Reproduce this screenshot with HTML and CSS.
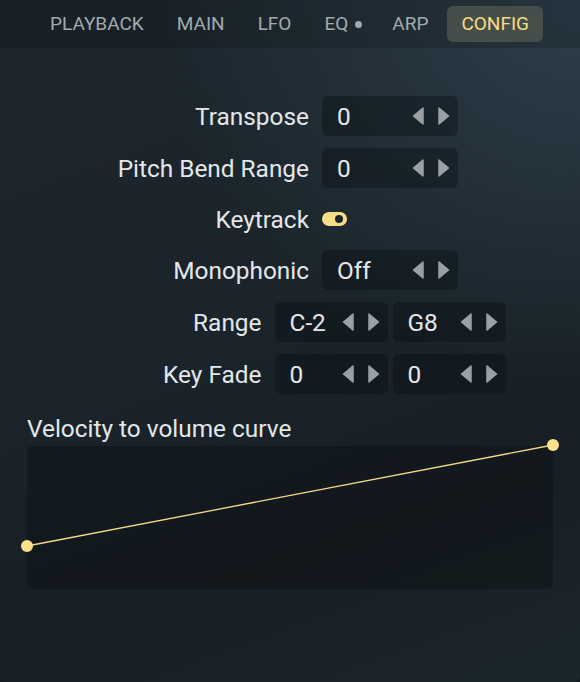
FILE: index.html
```html
<!DOCTYPE html>
<html>
<head>
<meta charset="utf-8">
<link rel="stylesheet" href="styles.css">
</head>
<body>
<div class="panel">
  <nav class="tabs">
    <span class="tab">PLAYBACK</span>
    <span class="tab">MAIN</span>
    <span class="tab">LFO</span>
    <span class="tab eq">EQ<span class="dot"></span></span>
    <span class="tab">ARP</span>
    <span class="tab active">CONFIG</span>
  </nav>
  <section class="settings">
    <div class="row">
      <div class="label">Transpose</div>
      <div class="field wide"><span class="val">0</span><span class="arrows"><svg class="arr" viewBox="0 0 12 18"><path d="M11 1 L11 17 L1.5 9 Z"/></svg><svg class="arr" viewBox="0 0 12 18"><path d="M1 1 L1 17 L10.5 9 Z"/></svg></span></div>
    </div>
    <div class="row">
      <div class="label">Pitch Bend Range</div>
      <div class="field wide"><span class="val">0</span><span class="arrows"><svg class="arr" viewBox="0 0 12 18"><path d="M11 1 L11 17 L1.5 9 Z"/></svg><svg class="arr" viewBox="0 0 12 18"><path d="M1 1 L1 17 L10.5 9 Z"/></svg></span></div>
    </div>
    <div class="row short">
      <div class="label">Keytrack</div>
      <div class="ctrl wide"><span class="toggle"><span class="knob"></span></span></div>
    </div>
    <div class="row">
      <div class="label">Monophonic</div>
      <div class="field wide"><span class="val">Off</span><span class="arrows"><svg class="arr" viewBox="0 0 12 18"><path d="M11 1 L11 17 L1.5 9 Z"/></svg><svg class="arr" viewBox="0 0 12 18"><path d="M1 1 L1 17 L10.5 9 Z"/></svg></span></div>
    </div>
    <div class="row">
      <div class="label">Range</div>
      <div class="pair">
        <div class="field half"><span class="val">C-2</span><span class="arrows"><svg class="arr" viewBox="0 0 12 18"><path d="M11 1 L11 17 L1.5 9 Z"/></svg><svg class="arr" viewBox="0 0 12 18"><path d="M1 1 L1 17 L10.5 9 Z"/></svg></span></div>
        <div class="field half"><span class="val">G8</span><span class="arrows"><svg class="arr" viewBox="0 0 12 18"><path d="M11 1 L11 17 L1.5 9 Z"/></svg><svg class="arr" viewBox="0 0 12 18"><path d="M1 1 L1 17 L10.5 9 Z"/></svg></span></div>
      </div>
    </div>
    <div class="row">
      <div class="label">Key Fade</div>
      <div class="pair">
        <div class="field half"><span class="val">0</span><span class="arrows"><svg class="arr" viewBox="0 0 12 18"><path d="M11 1 L11 17 L1.5 9 Z"/></svg><svg class="arr" viewBox="0 0 12 18"><path d="M1 1 L1 17 L10.5 9 Z"/></svg></span></div>
        <div class="field half"><span class="val">0</span><span class="arrows"><svg class="arr" viewBox="0 0 12 18"><path d="M11 1 L11 17 L1.5 9 Z"/></svg><svg class="arr" viewBox="0 0 12 18"><path d="M1 1 L1 17 L10.5 9 Z"/></svg></span></div>
      </div>
    </div>
  </section>
  <section class="curve">
    <div class="curve-title">Velocity to volume curve</div>
    <div class="graph">
      <svg class="graph-svg" viewBox="0 0 580 160" width="580" height="160">
        <line x1="27" y1="101" x2="553" y2="0" stroke="#f3d98a" stroke-width="1.3"/>
        <circle cx="27" cy="101" r="6" fill="#fde08a"/>
        <circle cx="553" cy="0" r="6" fill="#fde08a"/>
      </svg>
    </div>
  </section>
</div>
</body>
</html>
```
FILE: styles.css
```css
html, body {
  margin: 0;
  padding: 0;
  background: #141b20;
}
body {
  font-family: Roboto, "Noto Sans", sans-serif;
}
.panel {
  width: 580px;
  height: 682px;
  box-sizing: border-box;
  border-radius: 0 0 6px 6px;
  overflow: hidden;
  background:
    radial-gradient(ellipse 420px 380px at 100% 0%, rgba(48,66,80,0.85), rgba(48,66,80,0) 100%),
    linear-gradient(160deg, #1d262d 0%, #1a242a 45%, #171f24 75%, #1b262b 100%);
  display: flex;
  flex-direction: column;
}
.tabs {
  height: 48px;
  display: flex;
  align-items: center;
  padding-left: 36px;
  background: rgba(10, 16, 20, 0.22);
  box-sizing: border-box;
}
.tab {
  font-size: 19px;
  color: #a3a9ad;
  padding: 0 14px;
  height: 36px;
  line-height: 36px;
  margin-right: 5px;
  display: flex;
  align-items: center;
}
.tab.eq {
  padding-right: 11px;
}
.tab .dot {
  width: 7px;
  height: 7px;
  border-radius: 50%;
  background: #a3a9ad;
  margin-left: 7px;
}
.tab.active {
  background: #454e48;
  color: #f7dd85;
  border-radius: 6px;
}
.settings {
  padding-top: 48px;
  padding-right: 5px;
  display: flex;
  flex-direction: column;
  gap: 12px;
}
.row {
  display: flex;
  justify-content: center;
  align-items: center;
  gap: 13px;
  height: 40px;
}
.row.short {
  height: 38px;
}
.label {
  width: 192px;
  text-align: right;
  color: #e4e7e9;
  font-size: 24.4px;
}
.ctrl {
  height: 38px;
  display: flex;
  align-items: center;
}
.wide { width: 136px; }
.half { width: 113px; }
.pair {
  display: flex;
  gap: 5px;
}
.field {
  height: 40px;
  box-sizing: border-box;
  background: rgba(12, 18, 22, 0.45);
  border-radius: 6px;
  display: flex;
  align-items: center;
  justify-content: space-between;
  padding: 0 8px 0 15px;
}
.val {
  color: #e4e7e9;
  font-size: 24.4px;
}
.arrows {
  display: flex;
  gap: 14px;
  align-items: center;
}
.arr {
  width: 12px;
  height: 18px;
  fill: #9aa0a3;
  stroke: #9aa0a3;
  stroke-width: 1.5;
  stroke-linejoin: round;
}
.toggle {
  width: 25px;
  height: 14px;
  border-radius: 7px;
  background: #f7dd85;
  position: relative;
  display: block;
}
.knob {
  position: absolute;
  width: 8px;
  height: 8px;
  border-radius: 50%;
  background: #1b252b;
  right: 4px;
  top: 3px;
}
.curve {
  padding: 0 27px;
}
.curve-title {
  color: #e4e7e9;
  font-size: 24.4px;
  height: 52px;
  box-sizing: border-box;
  padding-top: 21px;
  line-height: 28px;
}
.graph {
  height: 143px;
  background: rgba(8, 12, 15, 0.35);
  border-radius: 6px;
  position: relative;
}
.graph-svg {
  position: absolute;
  left: -27px;
  top: -1px;
  overflow: visible;
}
```
